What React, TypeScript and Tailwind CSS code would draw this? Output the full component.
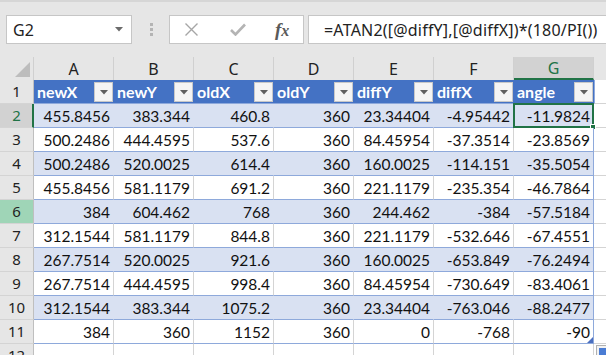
import { Fragment } from "react";

const cols = ["A", "B", "C", "D", "E", "F", "G"];
const heads = ["newX", "newY", "oldX", "oldY", "diffY", "diffX", "angle"];
const rows = [
  ["455.8456", "383.344", "460.8", "360", "23.34404", "-4.95442", "-11.9824"],
  ["500.2486", "444.4595", "537.6", "360", "84.45954", "-37.3514", "-23.8569"],
  ["500.2486", "520.0025", "614.4", "360", "160.0025", "-114.151", "-35.5054"],
  ["455.8456", "581.1179", "691.2", "360", "221.1179", "-235.354", "-46.7864"],
  ["384", "604.462", "768", "360", "244.462", "-384", "-57.5184"],
  ["312.1544", "581.1179", "844.8", "360", "221.1179", "-532.646", "-67.4551"],
  ["267.7514", "520.0025", "921.6", "360", "160.0025", "-653.849", "-76.2494"],
  ["267.7514", "444.4595", "998.4", "360", "84.45954", "-730.649", "-83.4061"],
  ["312.1544", "383.344", "1075.2", "360", "23.34404", "-763.046", "-88.2477"],
  ["384", "360", "1152", "360", "0", "-768", "-90"],
];

function FilterButton() {
  return (
    <div className="absolute right-[1px] top-[2px] w-[19px] h-[20px] bg-[#f4f4f4] border border-[#c8c8c8] flex items-center justify-center">
      <svg width="8" height="5" viewBox="0 0 8 5">
        <polygon points="0,0 8,0 4,4.5" fill="#5f5f5f" />
      </svg>
    </div>
  );
}

function RowHeader({ n, kind }: { n: number; kind?: "active" | "green" }) {
  const base =
    "w-[34px] shrink-0 h-full flex items-center justify-center border-b border-[#d4d4d4] text-[15px] font-['Noto_Sans',sans-serif]";
  if (kind === "active")
    return <div className={`${base} bg-[#d2d2d2] text-[#217346] border-r-2 border-r-[#217346] pl-[1px]`}>{n}</div>;
  if (kind === "green")
    return <div className={`${base} bg-[#9fd5b7] text-[#222] border-r border-r-[#bfbfbf]`}>{n}</div>;
  return <div className={`${base} bg-[#e6e6e6] text-[#222] border-r border-r-[#bfbfbf]`}>{n}</div>;
}

export default function App() {
  return (
    <div className="w-[606px] h-[355px] overflow-hidden bg-white font-['Lato',sans-serif] text-[#111]">
      {/* formula bar */}
      <div className="h-[57px] bg-[#e6e6e6] border-t-2 border-[#d6d6d6] pt-[13px] flex items-start font-['Noto_Sans',sans-serif]">
        <div className="ml-[6px] w-[127px] h-[29px] bg-white border border-[#c6c6c6] flex items-center justify-between pl-[6px] pr-[8px]">
          <span className="text-[16px] text-[#222]">G2</span>
          <svg width="8" height="5" viewBox="0 0 8 5">
            <polygon points="0,0 8,0 4,4.5" fill="#6b6b6b" />
          </svg>
        </div>
        <div className="w-[37px] h-[29px] flex flex-col items-center justify-center gap-[2px] pl-[1px]">
          <div className="w-[3px] h-[3px] bg-[#b4b4b4]" />
          <div className="w-[3px] h-[3px] bg-[#b4b4b4]" />
          <div className="w-[3px] h-[3px] bg-[#b4b4b4]" />
        </div>
        <div className="w-[136px] h-[29px] bg-white border border-[#c6c6c6] flex items-center">
          <svg className="ml-[14px]" width="15" height="15" viewBox="0 0 15 15">
            <path d="M1.5 1.5 L13.5 13.5 M13.5 1.5 L1.5 13.5" stroke="#a6a6a6" strokeWidth="1.4" />
          </svg>
          <svg className="ml-[31px]" width="16" height="13" viewBox="0 0 16 13">
            <path d="M1 7 L5.5 11.5 L15 1.5" stroke="#b4b4b4" strokeWidth="2.6" fill="none" />
          </svg>
          <span className="ml-[29px] font-['Liberation_Serif',serif] italic font-bold text-[19px] text-[#5a5a5a] leading-none">
            f<span className="text-[16px]">x</span>
          </span>
        </div>
        <div className="ml-[4px] w-[300px] h-[29px] bg-white border border-[#c6c6c6] border-r-0 flex items-center pl-[15px] text-[16px] tracking-[0.2px] text-[#222] whitespace-nowrap">
          =ATAN2([@diffY],[@diffX])*(180/PI())
        </div>
      </div>

      {/* column headers */}
      <div className="h-[23px] flex bg-[#e6e6e6] text-[16px] text-[#222] font-['Noto_Sans',sans-serif]">
        <div className="w-[34px] shrink-0 border-r border-[#d0d0d0] flex items-end justify-end pr-[3px] pb-[3px]">
          <svg width="15" height="15" viewBox="0 0 15 15">
            <polygon points="15,0 15,15 0,15" fill="#bdbdbd" />
          </svg>
        </div>
        {cols.map((c) =>
          c === "G" ? (
            <div
              key={c}
              className="w-[80px] shrink-0 border-r border-[#d0d0d0] border-b-2 border-b-[#217346] bg-[#d2d2d2] text-[#217346] flex items-center justify-center"
            >
              {c}
            </div>
          ) : (
            <div key={c} className="w-[80px] shrink-0 border-r border-[#d0d0d0] flex items-center justify-center">
              {c}
            </div>
          )
        )}
        <div className="flex-1" />
      </div>

      {/* row 1: table header */}
      <div className="h-[24px] flex">
        <RowHeader n={1} />
        {heads.map((h) => (
          <div
            key={h}
            className="relative w-[80px] shrink-0 h-full bg-[#4472c4] border-b border-[#8ea9db] text-white font-bold text-[16px] pl-[3px] pt-[1px] flex items-center"
          >
            {h}
            <FilterButton />
          </div>
        ))}
        <div className="flex-1 border-l border-[#8ea9db] border-b border-b-[#d4d4d4]" />
      </div>

      {/* data rows */}
      {rows.map((r, i) => {
        const n = i + 2;
        const band = i % 2 === 0;
        return (
          <div key={n} className="h-[24px] flex">
            <RowHeader n={n} kind={n === 2 ? "active" : n === 6 ? "green" : undefined} />
            {r.map((v, j) => (
              <Fragment key={j}>
                <div
                  className={`relative w-[80px] shrink-0 h-full border-b border-[#8ea9db] flex items-center justify-end pr-[3px] pt-[2px] text-[15.5px] ${
                    band ? "bg-[#d9e1f2] border-r border-r-[#d9e1f2]" : "bg-white border-r border-r-[#d4d4d4]"
                  } ${j === 6 ? "!border-r-[#8ea9db]" : ""}`}
                >
                  {v}
                  {n === 2 && j === 6 && (
                    <div className="absolute -left-[1px] -top-[1px] -right-[1px] -bottom-[1px] border-2 border-[#217346]">
                      <div className="absolute -right-[4px] -bottom-[4px] w-[6px] h-[6px] bg-[#217346] border border-white" />
                    </div>
                  )}
                  {n === 11 && j === 6 && (
                    <svg className="absolute right-0 bottom-0" width="6" height="6" viewBox="0 0 6 6">
                      <polygon points="6,0 6,6 0,6" fill="#4a6fc0" />
                    </svg>
                  )}
                </div>
              </Fragment>
            ))}
            <div className="flex-1 border-b border-[#d4d4d4]" />
          </div>
        );
      })}

      {/* row 12 */}
      <div className="h-[24px] flex">
        <RowHeader n={12} />
        {cols.map((c) => (
          <div key={c} className="w-[80px] shrink-0 h-full border-r border-[#d4d4d4]" />
        ))}
        <div className="relative flex-1">
          <div className="absolute left-[2px] top-[1px] w-[14px] h-[14px] border border-[#b0b0b0] bg-[#f2f2f2] p-[2px]">
            <div className="w-full h-full bg-[#4a7cd4]" />
          </div>
        </div>
      </div>
    </div>
  );
}
